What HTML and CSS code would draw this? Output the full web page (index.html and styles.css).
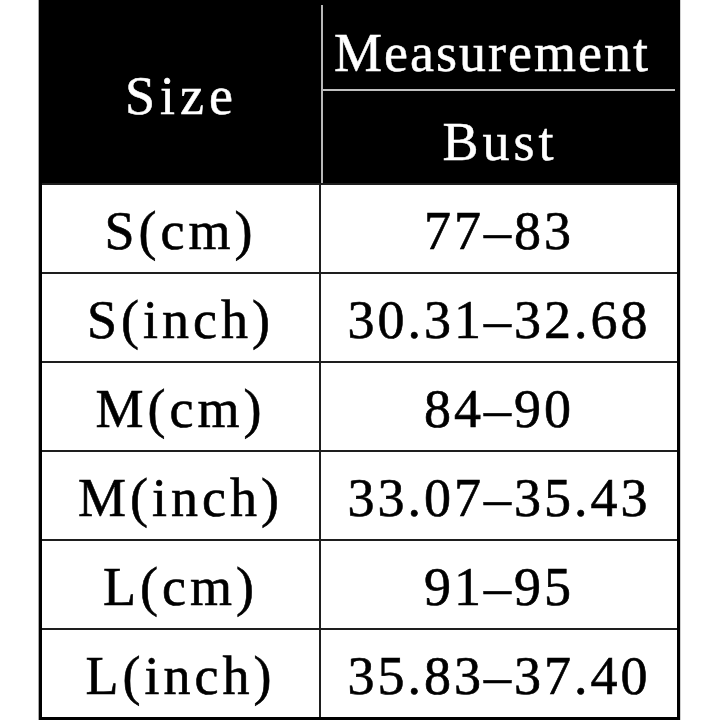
FILE: index.html
```html
<!DOCTYPE html>
<html>
<head>
<meta charset="utf-8">
<link rel="stylesheet" href="styles.css">
</head>
<body>
<div class="chart">
  <div class="table">
    <div class="head">
      <div class="head-size">Size</div>
      <div class="head-right">
        <div class="head-measure">Measurement</div>
        <div class="head-bust">Bust</div>
      </div>
    </div>
    <div class="row"><div class="cell size">S(cm)</div><div class="cell val">77–83</div></div>
    <div class="row"><div class="cell size">S(inch)</div><div class="cell val">30.31–32.68</div></div>
    <div class="row"><div class="cell size">M(cm)</div><div class="cell val">84–90</div></div>
    <div class="row"><div class="cell size">M(inch)</div><div class="cell val">33.07–35.43</div></div>
    <div class="row"><div class="cell size">L(cm)</div><div class="cell val">91–95</div></div>
    <div class="row"><div class="cell size">L(inch)</div><div class="cell val">35.83–37.40</div></div>
  </div>
</div>
</body>
</html>
```
FILE: styles.css
```css
html, body {
  margin: 0;
  padding: 0;
  background: #fff;
}
body {
  width: 720px;
  height: 720px;
  overflow: hidden;
  font-family: "Liberation Serif", "Times New Roman", serif;
  font-size: 54px;
  letter-spacing: 2px;
}
.chart {
  margin-left: 38px;
  width: 643px;
  border-left: 1px solid #a8a8a8;
  border-right: 1px solid #d0d0d0;
  box-sizing: border-box;
}
.table {
  border-left: 3px solid #000;
  border-right: 3px solid #000;
  border-bottom: 3px solid #000;
}
.head {
  display: grid;
  grid-template-columns: 279px 1fr;
  height: 183px;
  background: #000;
  color: #fff;
  -webkit-text-stroke: 0.5px #fff;
}
.head-size {
  display: flex;
  align-items: center;
  justify-content: center;
  padding-top: 8px;
  letter-spacing: 5px;
}
.head-right {
  margin-top: 5px;
  border-left: 2px solid #b8b8b8;
  display: flex;
  flex-direction: column;
}
.head-measure {
  height: 86px;
  border-bottom: 2px solid #c0c0c0;
  margin-right: 2px;
  display: flex;
  align-items: center;
  justify-content: center;
  padding-top: 12px;
  padding-right: 14px;
  box-sizing: border-box;
}
.head-bust {
  flex: 1;
  display: flex;
  align-items: center;
  justify-content: center;
  padding-top: 10px;
  letter-spacing: 4px;
}
.row {
  display: grid;
  grid-template-columns: 279px 1fr;
  height: 89px;
  border-top: 2px solid #1e1e1e;
  box-sizing: border-box;
  color: #000;
  -webkit-text-stroke: 0.6px #000;
}
.cell {
  display: flex;
  align-items: center;
  justify-content: center;
  padding-top: 5px;
}
.size {
  border-right: 2px solid #1e1e1e;
  letter-spacing: 4px;
}
.val {
  letter-spacing: 3px;
}
```
